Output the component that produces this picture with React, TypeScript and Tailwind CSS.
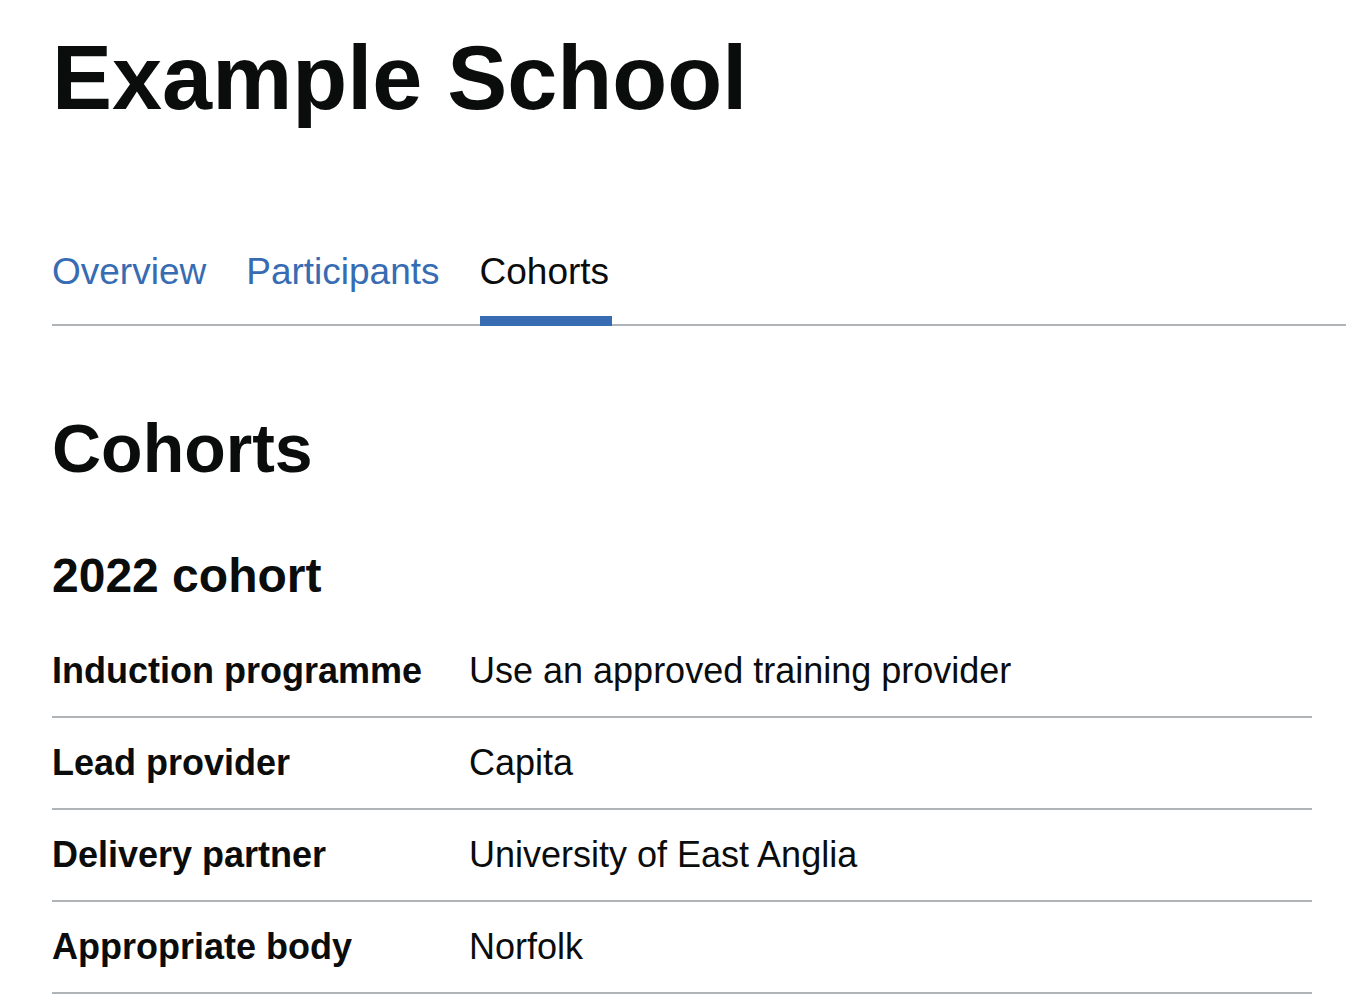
import React from "react";

const tabs = [
  { label: "Overview", current: false },
  { label: "Participants", current: false },
  { label: "Cohorts", current: true },
];

const rows = [
  { key: "Induction programme", value: "Use an approved training provider" },
  { key: "Lead provider", value: "Capita" },
  { key: "Delivery partner", value: "University of East Anglia" },
  { key: "Appropriate body", value: "Norfolk" },
];

const App = () => {
  return (
    <div className="min-h-screen bg-white pl-[52px] text-[#0b0c0c] font-['Liberation_Sans',Arial,sans-serif]">
      {/* Page heading */}
      <h1 className="pt-[28px] text-[90px] leading-[100px] font-bold">Example School</h1>

      {/* Sub navigation */}
      <nav className="mt-[119px] border-b-2 border-[#b1b4b6]">
        <ul className="flex gap-[40px]">
          {tabs.map((tab) => (
            <li key={tab.label} className="relative pb-[27px]">
              <a
                href="#"
                className={
                  tab.current
                    ? "block text-[37px] leading-[50px] text-[#0b0c0c] no-underline"
                    : "block text-[37px] leading-[50px] text-[#376cb3] no-underline"
                }
              >
                {tab.label}
              </a>
              {tab.current && (
                <span className="absolute left-0 right-[-3px] bottom-[-2px] h-[10px] bg-[#376cb3]" />
              )}
            </li>
          ))}
        </ul>
      </nav>

      {/* Cohorts */}
      <h2 className="mt-[84px] text-[68px] leading-[76px] font-bold">Cohorts</h2>
      <h3 className="mt-[62px] text-[48px] leading-[56px] font-bold">2022 cohort</h3>

      <dl className="mt-[22px] w-[1260px]">
        {rows.map((row) => (
          <div key={row.key} className="grid grid-cols-[417px_1fr] border-b-2 border-[#b1b4b6] py-[20px]">
            <dt className="text-[36px] leading-[50px] font-bold">{row.key}</dt>
            <dd className="text-[36px] leading-[50px]">{row.value}</dd>
          </div>
        ))}
      </dl>
    </div>
  );
};

export default App;
